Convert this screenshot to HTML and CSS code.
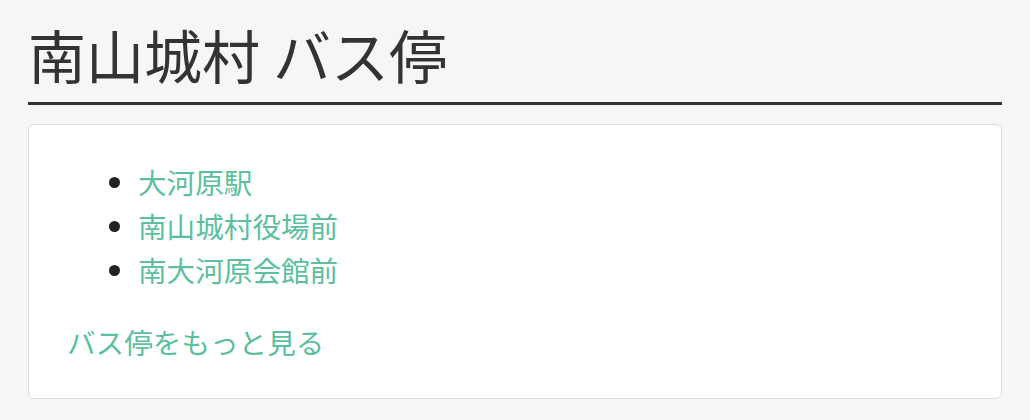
FILE: index.html
```
<!DOCTYPE html>
<html lang="ja">
  <head>
    <meta charset="utf-8"/>
    <title>南山城村 バス停</title>
    <link rel="stylesheet" href="styles.css">
  </head>
  <body>
    <div id="page">
      <h1 class="title">南山城村 バス停</h1>
      <div class="card">
        <ul class="stops">
          <li><a href="#">大河原駅</a></li>
          <li><a href="#">南山城村役場前</a></li>
          <li><a href="#">南大河原会館前</a></li>
        </ul>
        <a href="#" class="more">バス停をもっと見る</a>
      </div>
    </div>
  </body>
</html>
```

FILE: styles.css
```
html, body {
  margin: 0;
  padding: 0;
  background: #f5f6f8;
}

#page {
  padding: 0 28px;
  font-family: "Noto Sans CJK JP", "Noto Sans", sans-serif;
  color: #333;
}

.title {
  margin: 0;
  padding-top: 20px;
  padding-bottom: 14px;
  font-size: 58px;
  font-weight: normal;
  line-height: 68px;
  color: #333;
  border-bottom: 3px solid #333;
}

.card {
  margin-top: 19px;
  padding: 35px 38px 34px;
  background: #fff;
  border: 1px solid #dcdcdc;
  border-radius: 6px;
  font-size: 28.6px;
  line-height: 44px;
}

.stops {
  margin: 0 0 28px 0;
  padding-left: 71px;
  color: #222;
}

.card a {
  color: #5cbf9e;
  text-decoration: none;
}

.more {
  display: block;
}
```
